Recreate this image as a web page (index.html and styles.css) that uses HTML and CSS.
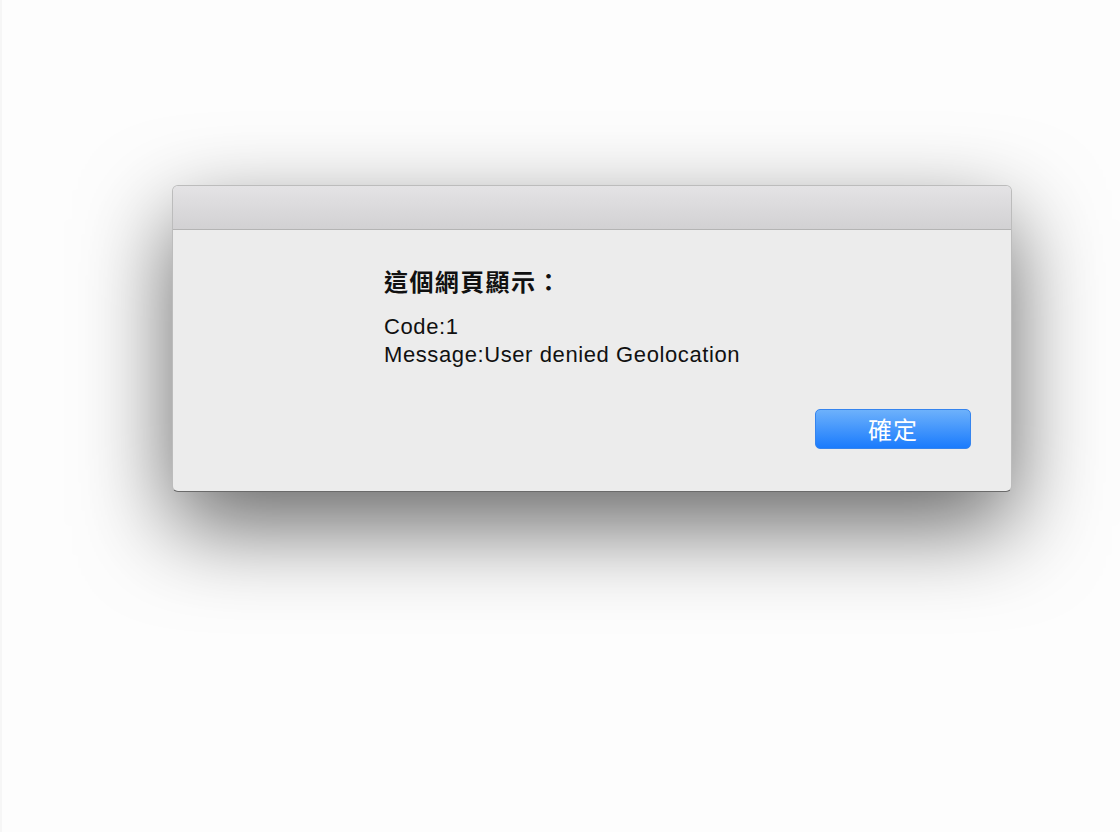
FILE: index.html
```html
<!DOCTYPE html>
<html lang="zh-Hant">
<head>
<meta charset="utf-8">
<title>這個網頁顯示</title>
<link rel="stylesheet" href="styles.css">
</head>
<body>
<div class="page">
  <div class="dialog">
    <div class="titlebar"></div>
    <div class="body">
      <div class="content">
        <h1 class="heading">這個網頁顯示：</h1>
        <p class="message">Code:1<br>Message:User denied Geolocation</p>
      </div>
      <div class="actions">
        <button class="btn-ok" type="button">確定</button>
      </div>
    </div>
  </div>
</div>
</body>
</html>
```
FILE: styles.css
```css
html, body {
  margin: 0;
  padding: 0;
  background: #fdfdfd;
}

.page {
  width: 1120px;
  height: 832px;
  box-sizing: border-box;
  padding: 185px 0 0 170px;
  border-left: 2px solid #f6f6f6;
  overflow: hidden;
}

.dialog {
  width: 840px;
  height: 307px;
  box-sizing: border-box;
  border: 1px solid rgba(0, 0, 0, 0.2);
  border-bottom-color: rgba(0, 0, 0, 0.55);
  border-radius: 6px;
  background: #ececec;
  box-shadow: 0 34px 90px rgba(0, 0, 0, 0.6);
  display: flex;
  flex-direction: column;
  overflow: hidden;
}

.titlebar {
  height: 43px;
  flex: none;
  background: linear-gradient(#e4e3e5, #d2d1d3);
  border-bottom: 1px solid #b4b4b4;
}

.body {
  flex: 1;
  display: flex;
  flex-direction: column;
  padding: 35px 40px 0 211px;
}

.heading {
  margin: 0;
  font-family: "Noto Sans CJK TC", "Noto Sans CJK SC", sans-serif;
  font-weight: 700;
  font-size: 24px;
  line-height: 32px;
  letter-spacing: 1.4px;
  color: #111;
}

.message {
  margin: 16px 0 0;
  font-family: "Liberation Sans", Arial, sans-serif;
  font-size: 22px;
  line-height: 28px;
  letter-spacing: 0.6px;
  color: #111;
}

.actions {
  display: flex;
  justify-content: flex-end;
  margin-top: 40px;
}

.btn-ok {
  width: 156px;
  height: 40px;
  box-sizing: border-box;
  border: 1px solid #3584ee;
  border-radius: 5px;
  background: linear-gradient(#6db1fb, #1a7bfd);
  color: #fff;
  font-family: "Noto Sans CJK TC", "Noto Sans CJK SC", sans-serif;
  font-size: 24px;
  line-height: 36px;
  padding: 0;
  letter-spacing: 1px;
}
```
